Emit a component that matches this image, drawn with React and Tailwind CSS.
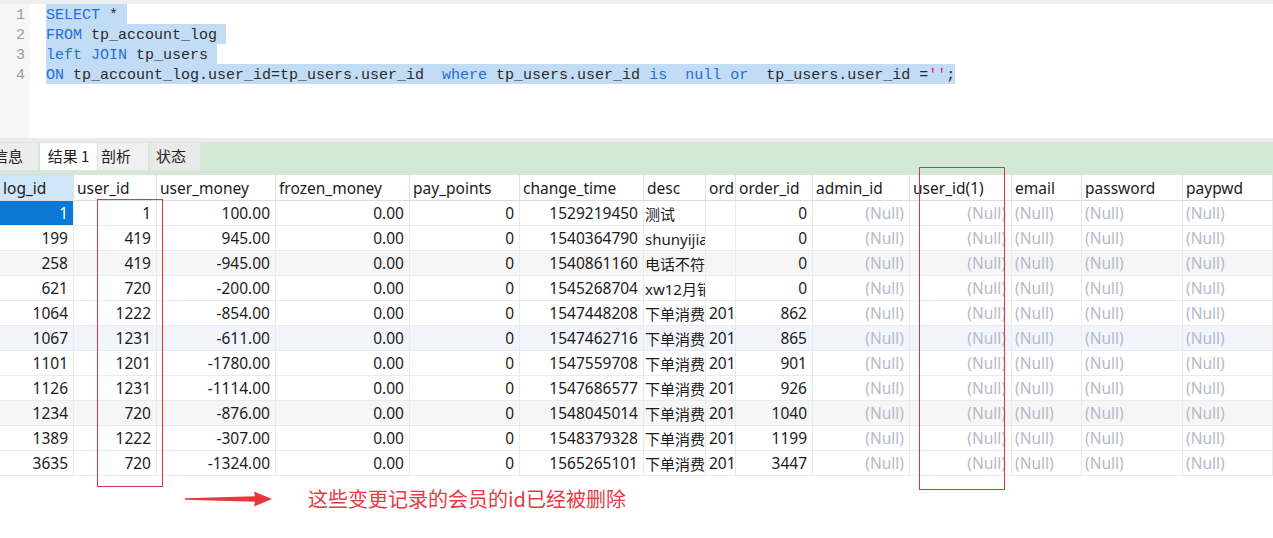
import React from "react";

const cols = [
  { name: "log_id", w: 74, align: "right" },
  { name: "user_id", w: 83, align: "right" },
  { name: "user_money", w: 119, align: "right" },
  { name: "frozen_money", w: 134, align: "right" },
  { name: "pay_points", w: 110, align: "right" },
  { name: "change_time", w: 124, align: "right" },
  { name: "desc", w: 62, align: "left" },
  { name: "ord", w: 30, align: "left" },
  { name: "order_id", w: 77, align: "right" },
  { name: "admin_id", w: 97, align: "right" },
  { name: "user_id(1)", w: 102, align: "right" },
  { name: "email", w: 70, align: "left" },
  { name: "password", w: 101, align: "left" },
  { name: "paypwd", w: 90, align: "left" },
];

const raw = [
  [1, 1, "100.00", 1529219450, "测试", "", 0],
  [199, 419, "945.00", 1540364790, "shunyijiang", "", 0],
  [258, 419, "-945.00", 1540861160, "电话不符合", "", 0],
  [621, 720, "-200.00", 1545268704, "xw12月销售", "", 0],
  [1064, 1222, "-854.00", 1547448208, "下单消费", "201901", 862],
  [1067, 1231, "-611.00", 1547462716, "下单消费", "201901", 865],
  [1101, 1201, "-1780.00", 1547559708, "下单消费", "201901", 901],
  [1126, 1231, "-1114.00", 1547686577, "下单消费", "201901", 926],
  [1234, 720, "-876.00", 1548045014, "下单消费", "201901", 1040],
  [1389, 1222, "-307.00", 1548379328, "下单消费", "201901", 1199],
  [3635, 720, "-1324.00", 1565265101, "下单消费", "201901", 3447],
];

const NULL = "(Null)";
const rows = raw.map((r) => [
  r[0], r[1], r[2], "0.00", 0, r[3], r[4], r[5], r[6], NULL, NULL, NULL, NULL, NULL,
]);

const rowBg = (i) => {
  if (i === 2 || i === 8) return "bg-[#f6f6f6]";
  if (i === 5) return "bg-[#f2f6fc]";
  return "bg-white";
};

const K = ({ children }) => <span className="text-[#1f6fd6]">{children}</span>;
const T = ({ children }) => <span className="text-[#2b2b2b]">{children}</span>;

function Sql() {
  const lines = [
    <><K>SELECT</K><T> * </T></>,
    <><K>FROM</K><T> tp_account_log </T></>,
    <><K>left JOIN</K><T> tp_users </T></>,
    <>
      <K>ON</K>
      <T> tp_account_log.user_id=tp_users.user_id  </T>
      <K>where</K>
      <T> tp_users.user_id </T>
      <K>is</K>
      <T>  </T>
      <K>null</K>
      <T> </T>
      <K>or</K>
      <T>  tp_users.user_id =</T>
      <span className="text-[#e0245e]">''</span>
      <T>;</T>
    </>,
  ];
  return (
    <div className="flex h-[134px]" style={{ fontFamily: "'Liberation Mono', monospace" }}>
      <div className="w-[30px] bg-[#f7f7f7] text-[#9a9a9a] text-[15px] text-right pr-[5px]">
        {[1, 2, 3, 4].map((n) => (
          <div key={n} className="h-[20px] leading-[24px]">{n}</div>
        ))}
      </div>
      <div className="pl-[16px] text-[15px]">
        {lines.map((l, i) => (
          <div key={i} className="h-[20px]">
            <span className="inline-block whitespace-pre bg-[#c3dcf5] h-[20px] leading-[24px]">{l}</span>
          </div>
        ))}
      </div>
    </div>
  );
}

function Tabs() {
  return (
    <div className="h-[32px] bg-[#d3e9d5] pt-[1px] overflow-hidden">
      <div className="flex h-[27px] ml-[-22px] text-[15px] text-[#222]" style={{ fontFamily: "'Noto Sans CJK SC', sans-serif" }}>
        <div className="w-[60px] bg-[#ececec] flex items-center justify-center">信息</div>
        <div className="w-[57px] ml-[2px] bg-white flex items-center justify-center">结果 1</div>
        <div className="w-[50px] ml-[1px] bg-[#f0f0f0] flex items-center pl-[3px]">剖析</div>
        <div className="w-[50px] ml-[2px] bg-[#e9e9e9] flex items-center pl-[6px]">状态</div>
      </div>
    </div>
  );
}

function Table() {
  return (
    <div className="text-[15.5px]" style={{ fontFamily: "'Noto Sans', 'Noto Sans CJK SC', sans-serif" }}>
      <div className="flex h-[26px] border-b border-[#dcdcdc] bg-white text-[#1b1b1b]">
        {cols.map((c, j) => (
          <div
            key={j}
            style={{ width: c.w }}
            className={`shrink-0 h-full flex items-center pl-[3px] pt-[2px] border-r border-[#e3e3e3] whitespace-nowrap overflow-hidden ${j === 0 ? "bg-[#cfe5f8]" : ""}`}
          >
            {c.name}
          </div>
        ))}
      </div>
      {rows.map((r, i) => (
        <div key={i} className={`flex h-[25px] border-b border-[#ebebeb] ${rowBg(i)}`}>
          {r.map((v, j) => {
            const c = cols[j];
            const isNull = v === NULL;
            const sel = i === 0 && j === 0;
            const isDesc = j === 6;
            return (
              <div
                key={j}
                style={{ width: c.w }}
                className={`shrink-0 h-full flex items-center pt-[2px] whitespace-nowrap overflow-hidden border-r border-[#ebebeb] ${
                  c.align === "right" ? "justify-end pr-[5px]" : isDesc ? "justify-start pl-[1px] text-[15px]" : "justify-start pl-[3px]"
                } ${sel ? "bg-[#0a78d4] text-white" : isNull ? "text-[#b4bac8]" : "text-[#1b1b1b]"}`}
              >
                {String(v)}
              </div>
            );
          })}
        </div>
      ))}
    </div>
  );
}

export default function App() {
  return (
    <div className="w-[1273px] h-[538px] bg-white relative overflow-hidden">
      <div className="h-[4px] bg-[#efefef]" />
      <Sql />
      <div className="h-[4px] bg-[#ebebeb]" />
      <Tabs />
      <div className="h-[1px] bg-[#dedede]" />
      <Table />
      <div className="flex items-center pt-[12px] h-[34px] pl-[185px]">
        <svg width="88" height="16" viewBox="0 0 88 16" className="shrink-0">
          <polygon points="0,7.3 70,5.3 69,0.5 87,8 69,15.5 70,10.7 0,8.7" fill="#e8363d" />
        </svg>
        <div
          className="ml-[35px] text-[20px] leading-[22px] text-[#e53b43] whitespace-nowrap"
          style={{ fontFamily: "'Noto Sans CJK SC', sans-serif" }}
        >
          这些变更记录的会员的id已经被删除
        </div>
      </div>
      <div className="absolute left-[97px] top-[199px] w-[66px] h-[288px] border border-[#d43a3f]" />
      <div className="absolute left-[919px] top-[167px] w-[86px] h-[323px] border border-[#d43a3f]" />
    </div>
  );
}
